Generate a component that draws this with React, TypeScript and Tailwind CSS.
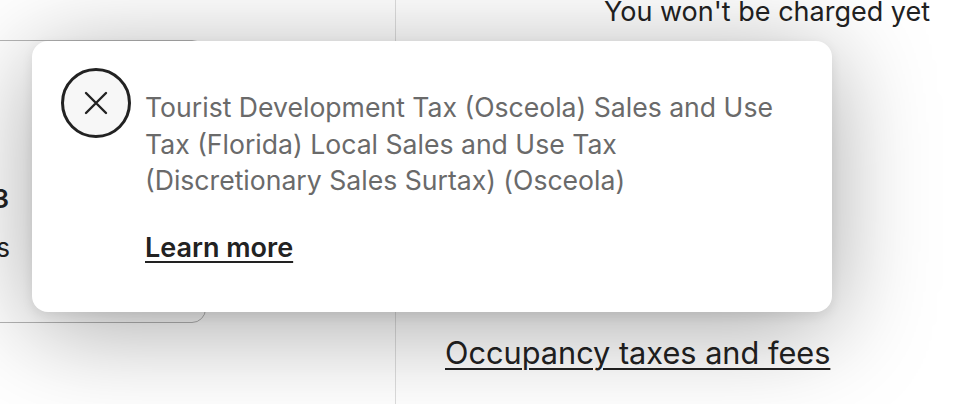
import React from "react";

export default function App() {
  const font = { fontFamily: "Inter, Roboto, 'Noto Sans', sans-serif" };
  return (
    <div className="relative w-[972px] h-[404px] overflow-hidden bg-white text-[#222222]" style={font}>
      <div className="flex h-full">
        {/* left column */}
        <div className="w-[396px] h-full border-r border-[#dddddd] pt-[40px]">
          <div className="ml-[-200px] w-[406px] h-[283px] rounded-r-[14px] border border-[#b5b5b5] pt-[140px]">
            <div className="w-[208px] text-right text-[26px] leading-[36px] font-semibold whitespace-nowrap">$1,233</div>
            <div className="mt-[13px] w-[209px] text-right text-[26px] leading-[36px] whitespace-nowrap">5 nights</div>
          </div>
        </div>
        {/* right column */}
        <div className="flex-1 h-full pl-[49px]">
          <div className="mt-[-6px] pl-[159px] text-[27px] leading-[36px] whitespace-nowrap">You won't be charged yet</div>
          <div className="h-[305px]" />
          <div className="w-fit text-[30.7px] leading-[36px] underline decoration-[2px] underline-offset-[4px] whitespace-nowrap">
            Occupancy taxes and fees
          </div>
        </div>
      </div>

      {/* popover */}
      <div className="absolute left-[32px] top-[41px] w-[800px] h-[271px] rounded-[16px] bg-white shadow-[0_4px_12px_rgba(0,0,0,0.08),0_16px_100px_rgba(0,0,0,0.35)] flex pl-[29px] pt-[27px]">
        <button className="shrink-0 w-[70px] h-[70px] rounded-full border-[3px] border-[#222222] bg-[#f7f7f7] flex items-center justify-center">
          <svg width="24" height="24" viewBox="0 0 24 24" fill="none" stroke="#222222" strokeWidth="2.4" strokeLinecap="round">
            <path d="M2 2 L22 22 M22 2 L2 22" />
          </svg>
        </button>
        <div className="ml-[14px] pt-[21px]">
          <p className="text-[26.6px] leading-[36.5px] text-[#6a6a6a] whitespace-nowrap">
            Tourist Development Tax (Osceola) Sales and Use
            <br />
            Tax (Florida) Local Sales and Use Tax
            <br />
            (Discretionary Sales Surtax) (Osceola)
          </p>
          <a className="mt-[31px] block w-fit text-[27px] leading-[36px] font-semibold text-[#222222] underline decoration-[2px] underline-offset-[4px]">
            Learn more
          </a>
        </div>
      </div>
    </div>
  );
}
